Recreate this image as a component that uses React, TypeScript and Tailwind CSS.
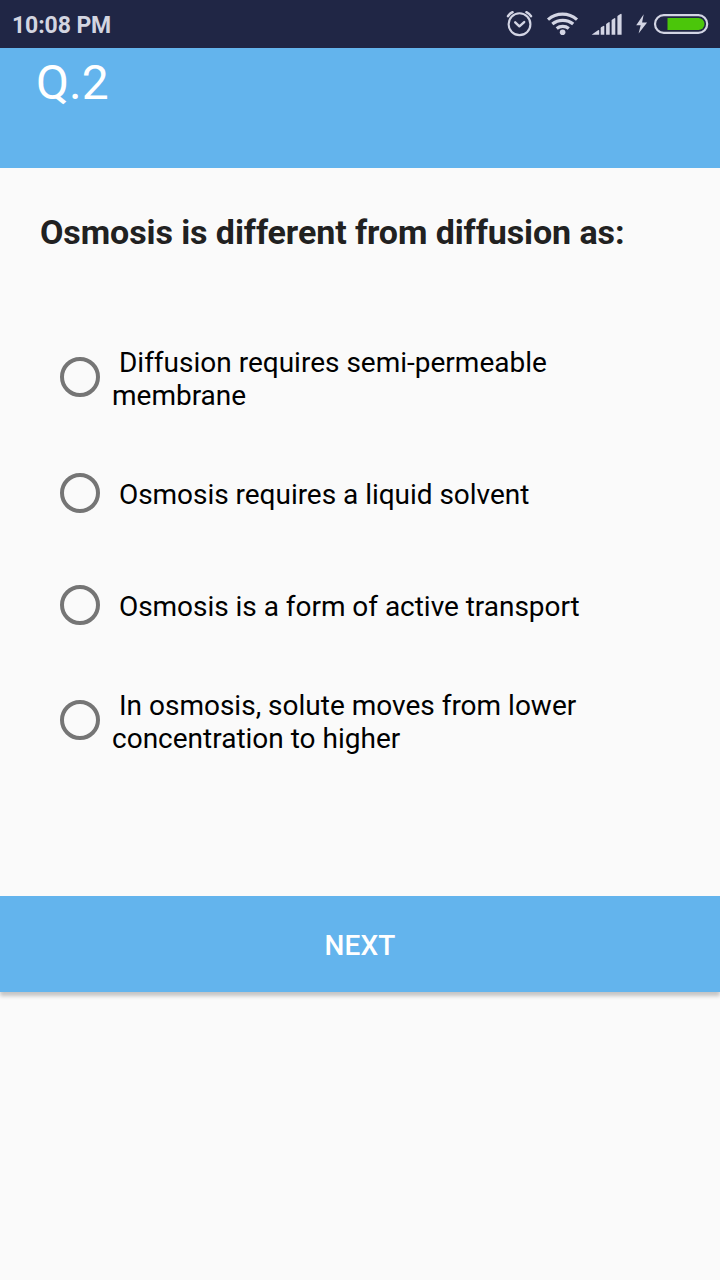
import React, { useState } from 'react';

interface Option {
  id: string;
  text: string;
  height: string;
  offset: string;
  tracking: string;
}

const options: Option[] = [
  {
    id: 'a',
    text: ' Diffusion requires semi-permeable membrane',
    height: 'h-[119px]',
    offset: 'mb-0.5',
    tracking: 'tracking-normal',
  },
  {
    id: 'b',
    text: ' Osmosis requires a liquid solvent',
    height: 'h-[112px]',
    offset: 'mb-0',
    tracking: 'tracking-[-0.03px]',
  },
  {
    id: 'c',
    text: ' Osmosis is a form of active transport',
    height: 'h-[112px]',
    offset: 'mb-0',
    tracking: 'tracking-[-0.03px]',
  },
  {
    id: 'd',
    text: ' In osmosis, solute moves from lower concentration to higher',
    height: 'h-[119px]',
    offset: 'mb-0.5',
    tracking: 'tracking-normal',
  },
];

const StatusIcons: React.FC = () => (
  <svg width="220" height="48" viewBox="500 0 220 48" fill="none" className="text-[#d3d5e4]">
    {/* alarm */}
    <g stroke="currentColor" strokeLinecap="round">
      <circle cx="519.5" cy="24.2" r="10.9" strokeWidth="2.1" />
      <path d="M515.2 22.3l4.2 4 4.8-4.2" strokeWidth="2.4" strokeLinejoin="round" />
      <path d="M508 16.2q1.6-2.6 4.6-4M531 16.2q-1.6-2.6-4.6-4" strokeWidth="2.5" />
    </g>
    {/* wifi */}
    <g stroke="currentColor" strokeWidth="3.2">
      <path d="M548 19.6c8.5-7.2 20.5-7.2 29 0" />
      <path d="M552.3 24.1c6-5 14.9-5 20.9 0" />
      <path d="M556.7 28.4c3.4-2.8 8.7-2.8 12.1 0" />
    </g>
    <circle cx="562.6" cy="32.2" r="2.8" fill="currentColor" />
    {/* signal */}
    <g fill="currentColor">
      <path d="M591.6 34.7l6.4-4.5q1.2-.7 1.2.6v3.9z" />
      <path d="M600.7 28.4q0-.8.7-1.3l1.9-1.2q1-.5 1 .6v8.2h-3.6z" />
      <path d="M606.1 24.7q0-.8.7-1.3l1.9-1.2q1-.5 1 .6v11.9h-3.6z" />
      <path d="M611.6 20.8q0-.8.7-1.3l2-1.3q1-.5 1 .6v15.9h-3.7z" />
      <path d="M617.4 16.8q0-.8.7-1.3l2.4-1.6q1.1-.5 1.1.6v20.2h-4.2z" />
      <path d="M643.7 14.3L636.2 25.2h4.5l-2.1 8.3 8.5-11h-5z" />
    </g>
    {/* battery */}
    <rect x="655" y="15.2" width="52.2" height="17.6" rx="8.8" stroke="currentColor" strokeWidth="2.2" />
    <path d="M667.5 18H698.5a6 6 0 0 1 0 12H667.5z" fill="#4bc60a" />
  </svg>
);

export default function App() {
  const [selected, setSelected] = useState<string | null>(null);

  return (
    <div className="flex h-[1280px] w-[720px] flex-col overflow-hidden bg-[#fafafa] font-['Roboto',sans-serif]">
      <div className="flex h-12 shrink-0 items-center justify-between bg-[#202645]">
        <span className="pl-3 pt-[3px] text-[23px] leading-none font-bold tracking-[-0.1px] text-[#d3d5e0]">
          10:08 PM
        </span>
        <StatusIcons />
      </div>

      <header className="h-[120px] shrink-0 bg-[#63b4ed] pl-9 pt-[7px]">
        <h1 className="text-[48px] leading-[56px] font-normal text-white">Q.2</h1>
      </header>

      <main className="h-[728px] shrink-0 pl-10">
        <h2 className="pt-11 text-[34px] leading-10 font-bold tracking-[-0.09px] whitespace-nowrap text-[#212121]">
          Osmosis is different from diffusion as:
        </h2>

        <div className="mt-[66px] flex flex-col pl-5" role="radiogroup">
          {options.map((option) => (
            <button
              key={option.id}
              type="button"
              role="radio"
              aria-checked={selected === option.id}
              onClick={() => setSelected(option.id)}
              className={`flex items-center gap-3 text-left ${option.height}`}
            >
              <span
                className={`flex size-10 shrink-0 items-center justify-center rounded-full border-4 border-[#757575] ${option.offset}`}
              >
                {selected === option.id && <span className="size-5 rounded-full bg-[#757575]" />}
              </span>
              <span
                className={`w-[500px] pt-0.5 text-[28px] leading-[33px] whitespace-pre-wrap text-black ${option.tracking}`}
              >
                {option.text}
              </span>
            </button>
          ))}
        </div>
      </main>

      <button
        type="button"
        className="h-24 shrink-0 bg-[#63b4ed] pt-1 text-[28px] font-medium tracking-[0.1px] text-white shadow-[0_4px_4px_rgba(0,0,0,0.22)]"
      >
        NEXT
      </button>
    </div>
  );
}
